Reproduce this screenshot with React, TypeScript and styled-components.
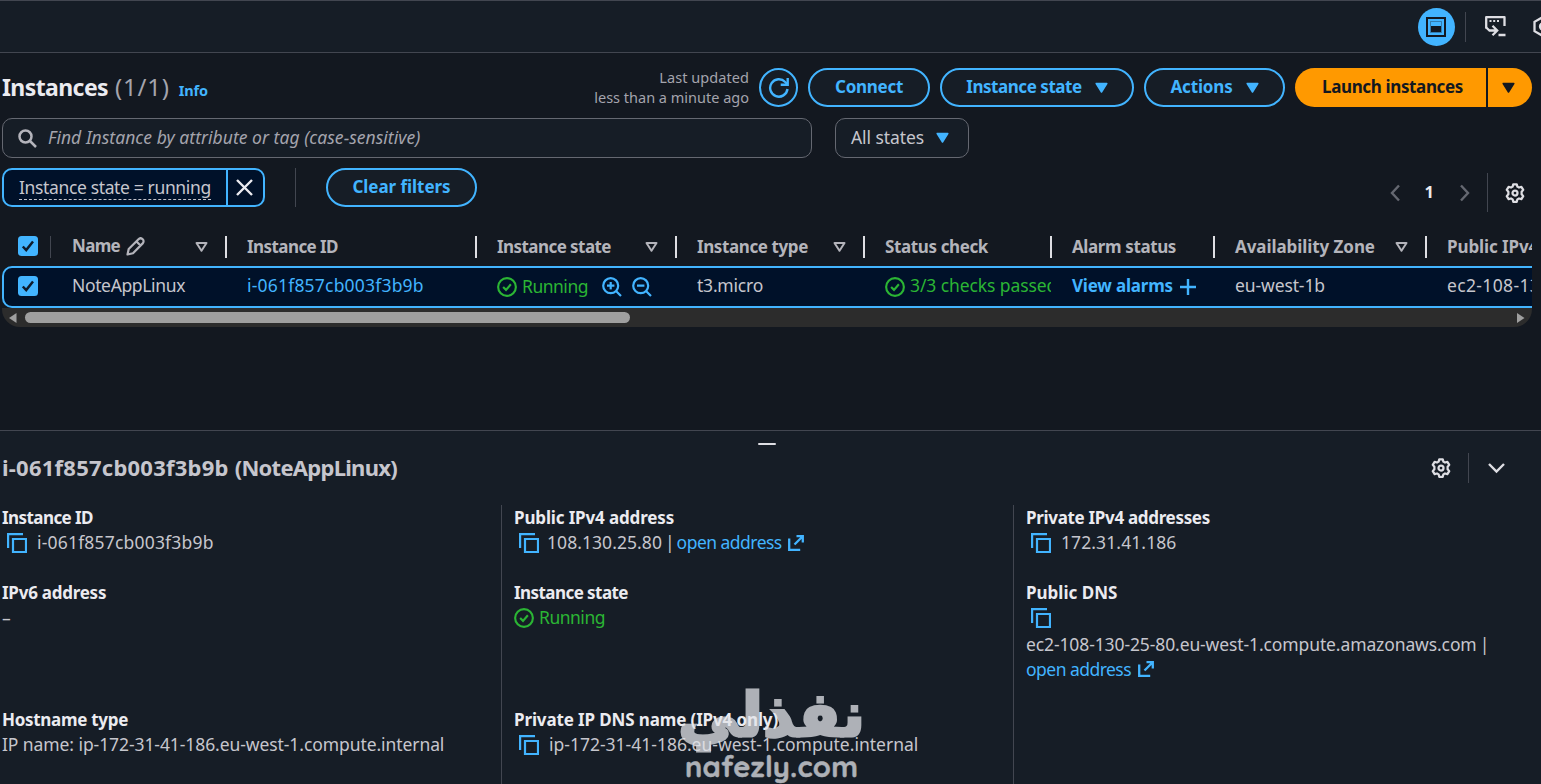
import React from "react";
import styled, { createGlobalStyle, css } from "styled-components";

const blue = "#42b4ff";
const green = "#2bb534";
const GlobalStyle = createGlobalStyle`
  * { box-sizing: border-box; }
  html, body { margin: 0; background: #131820; overflow: hidden; }
  body { font-family: "Noto Sans", "Open Sans", sans-serif; font-size: 17.5px; color: #c6c6cd; }
  svg { flex: none; }
`;

const Page = styled.div`
  position: relative;
  display: flex;
  flex-direction: column;
  width: 1541px;
  height: 784px;
  overflow: hidden;
  background: #131820;
`;

const T = styled.span<{ $ls?: number; $size?: number; $bold?: boolean; $color?: string; $italic?: boolean; $up?: number }>`
  white-space: nowrap;
  letter-spacing: ${(p) => p.$ls ?? 0}px;
  padding-bottom: ${(p) => p.$up ?? 0}px;
  ${(p) => p.$bold && css`font-weight: 700; font-size: 17px;`}
  ${(p) => p.$size && css`font-size: ${p.$size}px;`}
  ${(p) => p.$color && css`color: ${p.$color};`}
  ${(p) => p.$italic && css`font-style: italic;`}
`;

const TopBar = styled.header`
  height: 53px;
  flex: none;
  display: flex;
  align-items: center;
  background: #161d26;
  border-top: 1px solid #424650;
  border-bottom: 1px solid #424650;
  padding-left: 1418px;
`;
const PanelToggle = styled.div`
  width: 37px;
  height: 38px;
  flex: none;
  border-radius: 50%;
  background: ${blue};
  display: grid;
  place-items: center;
  padding-right: 1px;
`;
const VRule = styled.i<{ $h: number; $ml?: number; $mr?: number }>`
  flex: none;
  width: 1px;
  height: ${(p) => p.$h}px;
  margin-left: ${(p) => p.$ml ?? 0}px;
  margin-right: ${(p) => p.$mr ?? 0}px;
  background: #424650;
`;

const Main = styled.main`
  height: 377px;
  flex: none;
  padding: 15px 9px 0 2px;
  display: flex;
  flex-direction: column;
`;
const HeaderRow = styled.div`
  display: flex;
  height: 39px;
  align-items: center;
`;
const Heading = styled.h1`
  margin: 0;
  padding-top: 2px;
  display: flex;
  align-items: baseline;
  font-size: 22px;
  line-height: 30px;
  font-weight: 400;
`;
const Updated = styled.div`
  margin-left: auto;
  margin-right: 10px;
  padding-bottom: 2px;
  display: flex;
  flex-direction: column;
  align-items: flex-end;
  color: #a4a4ad;
  font-size: 14.5px;
  line-height: 20px;
`;
const Pill = styled.button<{ $w: number; $mr?: number }>`
  width: ${(p) => p.$w}px;
  height: 39px;
  flex: none;
  margin: 0 ${(p) => p.$mr ?? 0}px 0 0;
  padding: 0 0 2px;
  border: 2px solid ${blue};
  border-radius: 20px;
  background: #161d26;
  color: ${blue};
  font: 700 17px "Noto Sans", sans-serif;
  display: flex;
  align-items: center;
  justify-content: center;
  gap: 13px;
  span { font-size: 17px; }
  svg { margin-top: 2px; }
`;
const LaunchGroup = styled.div`
  display: flex;
  gap: 2px;
  height: 39px;
`;
const LaunchPart = styled.button<{ $w: number; $end?: boolean }>`
  width: ${(p) => p.$w}px;
  border: 0;
  margin: 0;
  padding: 0 ${(p) => (p.$end ? 4 : 0)}px 2px ${(p) => (p.$end ? 0 : 4)}px;
  background: #ff9900;
  color: #131820;
  font: 700 17px "Noto Sans", sans-serif;
  border-radius: ${(p) => (p.$end ? "0 20px 20px 0" : "20px 0 0 20px")};
  display: flex;
  align-items: center;
  justify-content: center;
  svg { margin-top: 3px; }
`;

const FilterRow = styled.div`
  display: flex;
  gap: 23px;
  margin-top: 11px;
  height: 40px;
`;
const Field = styled.div<{ $w: number; $pad: number }>`
  width: ${(p) => p.$w}px;
  height: 40px;
  border: 1px solid #656871;
  border-radius: 10px;
  background: #161d26;
  display: flex;
  align-items: center;
  padding-left: ${(p) => p.$pad}px;
`;
const TokenRow = styled.div`
  display: flex;
  margin-top: 10px;
  height: 39px;
  align-items: center;
`;
const Token = styled.div`
  display: flex;
  width: 263px;
  height: 39px;
  border: 2px solid ${blue};
  border-radius: 10px;
  background: #001129;
  overflow: hidden;
`;
const TokenText = styled.div`
  width: 224px;
  padding-left: 15px;
  padding-top: 5px;
  border-right: 2px solid ${blue};
  span {
    display: inline-block;
    line-height: 20px;
    height: 23px;
    border-bottom: 1px dashed #c6c6cd;
  }
`;
const TokenClose = styled.div`
  flex: 1;
  display: grid;
  place-items: center;
  padding-right: 2px;
`;
const Pager = styled.div`
  margin-left: auto;
  display: flex;
  align-items: center;
  padding-top: 10px;
  padding-right: 7px;
`;

const TableBox = styled.div`
  margin-top: 20px;
  width: 1530px;
  overflow: hidden;
`;
const HeadRow = styled.div`
  display: grid;
  grid-template-columns: 49px 175px 250px 200px 188px 187px 163px 212px 106px;
  height: 39px;
`;
const Row = styled.div`
  display: grid;
  grid-template-columns: 47px 175px 250px 200px 188px 187px 163px 212px 106px;
  width: 1560px;
  height: 42px;
  border: 2px solid ${blue};
  border-radius: 10px;
  background: #001129;
`;
const HeadCell = styled.div<{ $dim?: boolean; $first?: boolean }>`
  position: relative;
  display: flex;
  align-items: center;
  padding-left: ${(p) => (p.$first ? 16 : 21)}px;
  padding-right: 18px;
  padding-bottom: ${(p) => (p.$first ? 2 : 0)}px;
  min-width: 0;
  color: #b4b4bb;
  &::before {
    content: "";
    display: ${(p) => (p.$first ? "none" : "block")};
    position: absolute;
    left: -1px;
    top: 9px;
    width: ${(p) => (p.$dim ? 1 : 2)}px;
    height: 22px;
    background: ${(p) => (p.$dim ? "#424650" : "#dedee3")};
  }
  svg.sort { margin-left: auto; }
`;
const Cell = styled.div<{ $first?: boolean; $clip?: boolean }>`
  display: flex;
  align-items: center;
  padding-left: ${(p) => (p.$first ? 14 : 21)}px;
  padding-bottom: ${(p) => (p.$first ? 3 : 1)}px;
  min-width: 0;
  overflow: ${(p) => (p.$clip ? "hidden" : "visible")};
`;
const ScrollTrack = styled.div`
  display: flex;
  align-items: center;
  justify-content: space-between;
  height: 19px;
  padding: 0 7px;
  background: #2c2c2c;
  border-radius: 0 0 18px 18px;
`;
const ScrollThumb = styled.div`
  width: 605px;
  height: 11px;
  margin-left: 8px;
  margin-right: auto;
  border-radius: 6px;
  background: #9f9f9f;
`;

const Split = styled.section`
  flex: 1;
  border-top: 1px solid #424650;
  background: #161d26;
  display: flex;
  flex-direction: column;
`;
const Handle = styled.div`
  width: 18px;
  height: 2px;
  margin: 12px 0 0 758px;
  background: #dedee3;
  border-radius: 1px;
`;
const SplitHead = styled.div`
  display: flex;
  align-items: center;
  height: 30px;
  margin: 8px 36px 0 2px;
`;
const SplitTools = styled.div`
  display: flex;
  align-items: center;
  margin-left: auto;
`;
const Details = styled.div`
  display: grid;
  grid-template-columns: 501px 512px 528px;
  flex: 1;
  margin-top: 22px;
`;
const DetailCol = styled.div<{ $rule?: boolean }>`
  border-left: ${(p) => (p.$rule ? "1px solid #424650" : "0")};
  padding-left: ${(p) => (p.$rule ? 12 : 2)}px;
  display: grid;
  grid-template-rows: 75px 127px 77px;
`;
const Item = styled.div`
  display: flex;
  flex-direction: column;
`;
const Line = styled.div<{ $h?: number; $pl?: number }>`
  height: ${(p) => p.$h ?? 25}px;
  padding-left: ${(p) => p.$pl ?? 0}px;
  display: flex;
  align-items: center;
`;
const Label = styled(T)`
  font-weight: 700;
  font-size: 17px;
  color: #ebebf0;
  line-height: 25px;
`;
const Gap = styled.i<{ $w: number }>`
  flex: none;
  width: ${(p) => p.$w}px;
`;
const Watermark = styled.div`
  position: absolute;
  left: 678px;
  top: 680px;
  width: 186px;
  height: 104px;
  color: #e3e5ea;
  opacity: 0.74;
`;
const MarkArabic = styled.div`
  position: absolute;
  right: -1px;
  top: -5px;
  font: 700 61px/80px "DejaVu Sans", sans-serif;
  -webkit-text-stroke: 3px #e3e5ea;
  direction: rtl;
  white-space: nowrap;
`;
const MarkLatin = styled.div`
  position: absolute;
  left: 7px;
  top: 68px;
  font: 700 29px/36px "Quicksand", "DejaVu Sans", sans-serif;
  letter-spacing: 0.3px;
  -webkit-text-stroke: 0.4px #e3e5ea;
  white-space: nowrap;
`;

const Caret = ({ color = blue }: { color?: string }) => (
  <svg width="13" height="12" viewBox="0 0 13 12">
    <path d="M1.200 1.500h10.600L6.500 10z" fill={color} stroke={color} strokeWidth="1.500" strokeLinejoin="round" />
  </svg>
);
const SortIcon = () => (
  <svg className="sort" width="13" height="12" viewBox="0 0 13 12">
    <path d="M1.500 2h10L6.500 9.800z" fill="none" stroke="#b4b4bb" strokeWidth="2" strokeLinejoin="round" />
  </svg>
);
const Check = () => (
  <svg width="20" height="20" viewBox="0 0 20 20">
    <rect width="20" height="20" rx="3.500" fill={blue} />
    <path d="M4.800 10.500l3.400 3.500 6.800-8.500" fill="none" stroke="#0f1b2a" strokeWidth="2.500" />
  </svg>
);
const StatusOk = () => (
  <svg width="20" height="20" viewBox="0 0 16 16" fill="none" stroke={green} strokeWidth="1.700">
    <circle cx="8" cy="8" r="7.100" />
    <path d="M4.900 8l2.300 2.300 3.900-4.500" />
  </svg>
);
const Zoom = ({ plus }: { plus?: boolean }) => (
  <svg width="20" height="20" viewBox="0 0 20 20" fill="none" stroke={blue} strokeWidth="2.200">
    <circle cx="8.700" cy="8.700" r="7.500" />
    <path d="M14 14l5 5M5 8.700h7.400" />
    {plus && <path d="M8.700 5v7.400" />}
  </svg>
);
const Copy = () => (
  <svg width="20" height="20" viewBox="0 0 20 20" fill="none" stroke={blue} strokeWidth="2.200">
    <path d="M6 6h13v13H6z" />
    <path d="M1.100 15V1.100H16" />
  </svg>
);
const External = () => (
  <svg width="16" height="16" viewBox="0 0 16 16" fill="none" stroke={blue} strokeWidth="2.300">
    <path d="M1.200 3.500v11.300h11M8.500 1.200h6.300v6.300M14.500 1.500L6.500 9.500" />
  </svg>
);
const Gear = () => (
  <svg width="20" height="20" viewBox="0 0 16 16" fill="none" stroke="#dedee3" strokeWidth="1.800" strokeLinejoin="round">
    <path d="M6.600 1h2.800l.5 1.900 1.300.7 1.900-.5 1.500 2.400L13.300 7v2l1.300 1.500-1.500 2.400-1.900-.5-1.300.7-.5 1.900H6.600l-.5-1.900-1.300-.7-1.900.5-1.500-2.400L2.700 9V7L1.400 5.500l1.500-2.400 1.900.5 1.300-.7z" />
    <circle cx="8" cy="8" r="2" />
  </svg>
);
const Chevron = ({ d, color, w, h }: { d: string; color: string; w: number; h: number }) => (
  <svg width={w} height={h} viewBox={`0 0 ${w} ${h}`} fill="none" stroke={color} strokeWidth="2.400">
    <path d={d} />
  </svg>
);

export default function App() {
  return (
    <Page>
      <GlobalStyle />
      <TopBar>
        <PanelToggle>
          <svg width="20" height="20" viewBox="0 0 20 20" fill="none" stroke="#131820" strokeWidth="2">
            <path d="M1 1h18v18H1z" />
            <path d="M5 9h10v6H5z" fill="#131820" stroke="none" />
            <path d="M4.500 15.500v-11h11v11z" strokeWidth="1" opacity="0.35" />
          </svg>
        </PanelToggle>
        <VRule $h={30} $ml={10} $mr={19} />
        <svg width="21" height="21" viewBox="0 0 21 21" fill="none" stroke="#dedee3" strokeWidth="2.300">
          <path d="M1.200 12.500V1.200h18.300V10" strokeLinejoin="round" />
          <path d="M4.500 5h2M8.200 5h2M12 5h2" strokeWidth="2" />
          <path d="M1.200 11.500l3.300 3h7M7.500 9.800l4.700 4.700-4.700 4.700M13.500 19h7" />
        </svg>
        <Gap $w={27} />
        <svg width="20" height="21" viewBox="0 0 20 21" fill="none" stroke="#dedee3" strokeWidth="2.300">
          <path d="M10 1l8.500 4.800v9.400L10 20l-8.500-4.800V5.800z" />
          <circle cx="10" cy="10.500" r="3" />
        </svg>
      </TopBar>

      <Main>
        <HeaderRow>
          <Heading>
            <T $ls={-0.59} $bold $color="#ebebf0" $size={23}>Instances</T>
            <Gap $w={7} />
            <T $ls={0.8} $color="#a4a4ad" $size={24}>(1/1)</T>
            <Gap $w={9} />
            <T $ls={-0.19} $color={blue} $bold $size={14.5}>Info</T>
          </Heading>
          <Updated>
            <T $ls={0.06}>Last updated</T>
            <T>less than a minute ago</T>
          </Updated>
          <Pill $w={39} $mr={10}>
            <svg width="22" height="22" viewBox="0 0 22 22" fill="none" stroke={blue} strokeWidth="2.400">
              <path d="M19.500 12a8.700 8.700 0 1 1-2.300-7L19.500 7.300" />
              <path d="M19.700 1v6.700h-7" />
            </svg>
          </Pill>
          <Pill $w={122} $mr={10}><T $ls={-0.28}>Connect</T></Pill>
          <Pill $w={194} $mr={10}><T $ls={-0.45}>Instance state</T><Caret /></Pill>
          <Pill $w={141} $mr={10}><T $ls={-0.17}>Actions</T><Caret /></Pill>
          <LaunchGroup>
            <LaunchPart $w={191}><T $bold $ls={-0.36}>Launch instances</T></LaunchPart>
            <LaunchPart $w={44} $end><Caret color="#131820" /></LaunchPart>
          </LaunchGroup>
        </HeaderRow>

        <FilterRow>
          <Field $w={810} $pad={15}>
            <svg width="19" height="19" viewBox="0 0 19 19" fill="none" stroke="#b4b4bb" strokeWidth="2.500">
              <circle cx="7.500" cy="7.500" r="6" />
              <path d="M12 12l6 6" />
            </svg>
            <Gap $w={11} />
            <T $ls={0.04} $up={2} $italic $color="#a4a4ad">Find Instance by attribute or tag (case-sensitive)</T>
          </Field>
          <Field $w={134} $pad={15}>
            <T $ls={-0.08} $up={2}>All states</T>
            <Gap $w={12} />
            <Caret />
          </Field>
        </FilterRow>

        <TokenRow>
          <Token>
            <TokenText><T $ls={-0.36}>Instance state = running</T></TokenText>
            <TokenClose>
              <Chevron d="M1 1l15 15M16 1L1 16" color="#ebebf0" w={17} h={17} />
            </TokenClose>
          </Token>
          <VRule $h={39} $ml={30} $mr={30} />
          <Pill $w={151}><T $ls={-0.05}>Clear filters</T></Pill>
          <Pager>
            <Chevron d="M9 1.500L2 9l7 7.500" color="#656871" w={10} h={18} />
            <Gap $w={25} />
            <T $bold $color="#ebebf0" $size={16.5} $up={2}>1</T>
            <Gap $w={26} />
            <Chevron d="M1 1.500L8 9l-7 7.500" color="#656871" w={10} h={18} />
            <VRule $h={39} $ml={17} $mr={17} />
            <Gear />
          </Pager>
        </TokenRow>

        <TableBox>
          <HeadRow>
            <HeadCell $first><Check /></HeadCell>
            <HeadCell $dim>
              <T $ls={-0.68} $bold $up={3}>Name</T>
              <Gap $w={6} />
              <svg width="19" height="19" viewBox="0 0 19 19" fill="none" stroke="#b4b4bb" strokeWidth="2.200" strokeLinejoin="round">
                <path d="M1.500 17.500l1.200-5.500L12.500 2.200a2.800 2.800 0 0 1 4.200 4.200L7 16.200zM10.500 4.500l4 4" />
              </svg>
              <SortIcon />
            </HeadCell>
            <HeadCell><T $ls={-0.57} $bold>Instance ID</T></HeadCell>
            <HeadCell><T $ls={-0.56} $bold>Instance state</T><SortIcon /></HeadCell>
            <HeadCell><T $ls={-0.4} $bold>Instance type</T><SortIcon /></HeadCell>
            <HeadCell><T $ls={-0.38} $bold>Status check</T></HeadCell>
            <HeadCell><T $ls={-0.39} $bold>Alarm status</T></HeadCell>
            <HeadCell><T $ls={-0.07} $bold>Availability Zone</T><SortIcon /></HeadCell>
            <HeadCell><T $ls={-0.1} $bold>Public IPv4 DNS</T></HeadCell>
          </HeadRow>
          <Row>
            <Cell $first><Check /></Cell>
            <Cell><T $ls={-0.36} $up={3}>NoteAppLinux</T></Cell>
            <Cell><T $ls={0.2} $up={3} $color={blue}>i-061f857cb003f3b9b</T></Cell>
            <Cell>
              <StatusOk /><Gap $w={5} /><T $ls={-0.49} $up={1} $color={green}>Running</T>
              <Gap $w={14} /><Zoom plus /><Gap $w={10} /><Zoom />
            </Cell>
            <Cell><T $ls={-0.22} $up={3}>t3.micro</T></Cell>
            <Cell $clip><StatusOk /><Gap $w={5} /><T $ls={-0.09} $up={3} $color={green}>3/3 checks passed</T></Cell>
            <Cell>
              <T $ls={-0.19} $up={2} $bold $color={blue}>View alarms</T>
              <Gap $w={7} />
              <Chevron d="M8 0v16M0 8h16" color={blue} w={16} h={16} />
            </Cell>
            <Cell><T $ls={-0.11} $up={3}>eu-west-1b</T></Cell>
            <Cell><T $ls={0.35} $up={3}>ec2-108-130-25-80.eu-west-1</T></Cell>
          </Row>
          <ScrollTrack>
            <svg width="8" height="10" viewBox="0 0 8 10"><path d="M7.500 0v10L0 5z" fill="#9f9f9f" /></svg>
            <ScrollThumb />
            <svg width="8" height="10" viewBox="0 0 8 10"><path d="M0 0v10l7.500-5z" fill="#9f9f9f" /></svg>
          </ScrollTrack>
        </TableBox>
      </Main>

      <Split>
        <Handle />
        <SplitHead>
          <T $ls={0.24} $up={2} $bold $size={22}>i-061f857cb003f3b9b</T>
          <Gap $w={6} />
          <T $ls={-0.73} $up={2} $bold $size={22}>(NoteAppLinux)</T>
          <SplitTools>
            <Gear />
            <VRule $h={30} $ml={17} $mr={19} />
            <Chevron d="M1 2L8.500 9.500 16 2" color="#dedee3" w={17} h={12} />
          </SplitTools>
        </SplitHead>
        <Details>
          <DetailCol>
            <Item>
              <Label $ls={-0.57}>Instance ID</Label>
              <Line $pl={5}><Copy /><Gap $w={10} /><T $ls={0.19} $up={1}>i-061f857cb003f3b9b</T></Line>
            </Item>
            <Item><Label $ls={-0.25}>IPv6 address</Label><Line>–</Line></Item>
            <Item>
              <Label $ls={-0.3}>Hostname type</Label>
              <Line><T $ls={-0.08} $up={1}>IP name: ip-172-31-41-186.eu-west-1.compute.internal</T></Line>
            </Item>
          </DetailCol>
          <DetailCol $rule>
            <Item>
              <Label $ls={-0.15}>Public IPv4 address</Label>
              <Line $pl={5}>
                <Copy /><Gap $w={8} /><T $ls={0.06} $up={1}>108.130.25.80</T><Gap $w={3} /><T $up={1}>|</T><Gap $w={2} />
                <T $ls={-0.53} $up={1} $color={blue}>open address</T><Gap $w={6} /><External />
              </Line>
            </Item>
            <Item>
              <Label $ls={-0.56}>Instance state</Label>
              <Line><StatusOk /><Gap $w={5} /><T $ls={-0.49} $up={1} $color={green}>Running</T></Line>
            </Item>
            <Item>
              <Label $ls={-0.13}>Private IP DNS name (IPv4 only)</Label>
              <Line $pl={5}><Copy /><Gap $w={10} /><T $up={1}>ip-172-31-41-186.eu-west-1.compute.internal</T></Line>
            </Item>
          </DetailCol>
          <DetailCol $rule>
            <Item>
              <Label $ls={-0.32}>Private IPv4 addresses</Label>
              <Line $pl={5}><Copy /><Gap $w={10} /><T $ls={0.1} $up={1}>172.31.41.186</T></Line>
            </Item>
            <Item>
              <Label>Public DNS</Label>
              <Line $pl={5} $h={26}><Copy /></Line>
              <Line><T $ls={-0.11}>ec2-108-130-25-80.eu-west-1.compute.amazonaws.com</T><Gap $w={3} /><T>|</T></Line>
              <Line><T $ls={-0.53} $color={blue}>open address</T><Gap $w={7} /><External /></Line>
            </Item>
          </DetailCol>
        </Details>
      </Split>
      <Watermark>
        <MarkArabic>نفذلي</MarkArabic>
        <MarkLatin>nafezly.com</MarkLatin>
      </Watermark>
    </Page>
  );
}
